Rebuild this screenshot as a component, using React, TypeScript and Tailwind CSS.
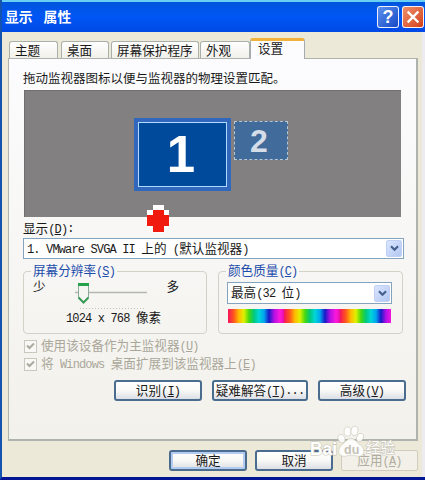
import type { ReactNode } from "react";
import clsx from "clsx";

// Half-width runs get their own face so they take half the advance of a Chinese glyph.
function Txt({ children, hotkey, className }: { children: string; hotkey?: string; className?: string }) {
  const runs = children.match(/[\x20-\x7e]+|[^\x20-\x7e]+/g) ?? [];
  return (
    <span className={clsx("whitespace-pre", className)}>
      {runs.map((run, i) =>
        /[\x20-\x7e]/.test(run) ? (
          <span key={i} className="font-['Liberation_Mono',monospace] text-[12px] tracking-[-0.85px]">
            {run}
          </span>
        ) : (
          <span key={i}>{run}</span>
        ),
      )}
      {hotkey && (
        <span className="font-['Liberation_Mono',monospace] text-[12px] tracking-[-0.85px]">
          (<span className="underline underline-offset-1">{hotkey}</span>)
        </span>
      )}
    </span>
  );
}

const tabs = [
  { label: "主题", className: "w-[49px] pl-[5px]" },
  { label: "桌面", className: "ml-[3px] w-[48px] pl-[5px]" },
  { label: "屏幕保护程序", className: "ml-[2px] w-[88px] pl-[5px]" },
  { label: "外观", className: "ml-px w-[50px] pl-[5px]" },
];

function Combo({ children, className }: { children: ReactNode; className?: string }) {
  return (
    <div className={clsx("flex items-center justify-between border border-[#83a3bf] bg-white pl-[3px] pr-px", className)}>
      {children}
      <span className="flex h-[17px] w-[16px] items-center justify-center rounded-[2px] border border-[#c0d0f5] bg-linear-to-br from-[#dbe6ff] to-[#b3c7f2]">
        <svg width="9" height="7" viewBox="0 0 9 7" fill="none" stroke="#45608c" strokeWidth="2.2">
          <path d="M1 1.3 4.5 4.8 8 1.3" />
        </svg>
      </span>
    </div>
  );
}

function Group({ title, hotkey, className, children }: { title: string; hotkey: string; className: string; children: ReactNode }) {
  return (
    <div className={clsx("relative h-[63px] rounded-[4px] border border-[#d3d2c8]", className)}>
      <span className="absolute -top-[10px] left-[7px] flex h-[18px] items-center bg-[#f8f7f5] px-[2px] text-[#1c4dab]">
        <Txt hotkey={hotkey}>{title}</Txt>
      </span>
      {children}
    </div>
  );
}

function Button({ children, hotkey, className }: { children: string; hotkey?: string; className?: string }) {
  return (
    <button
      className={clsx(
        "flex h-[21px] items-center justify-center rounded-[3px] border-2 border-[#4a6c8f] bg-linear-to-b from-white via-[#f8f8f6] to-[#dcdfe5]",
        className,
      )}
    >
      <Txt hotkey={hotkey}>{children}</Txt>
    </button>
  );
}

function Check({ children, hotkey }: { children: string; hotkey: string }) {
  return (
    <div className="flex h-[18px] items-center text-[#aaa79a]">
      <svg width="13" height="13" viewBox="0 0 13 13" className="mr-[4px]">
        <rect x=".5" y=".5" width="12" height="12" fill="#f8f8f6" stroke="#c9c8bd" />
        <path d="M3 5.5 5.5 8 10 3.5" fill="none" stroke="#aaa99d" strokeWidth="2" />
      </svg>
      <Txt hotkey={hotkey}>{children}</Txt>
    </div>
  );
}

function Watermark() {
  return (
    <svg className="pointer-events-none absolute left-[304px] top-[423px]" width="92" height="48" viewBox="0 0 92 48">
      <g fill="#fff" fillOpacity=".9" stroke="#cac7b9" strokeWidth=".6">
        <ellipse cx="35.5" cy="15.5" rx="3.3" ry="4.3" transform="rotate(-20 35.5 15.5)" />
        <ellipse cx="41.5" cy="8.5" rx="3.4" ry="4.6" />
        <ellipse cx="48.5" cy="7.8" rx="3.4" ry="4.6" transform="rotate(12 48.5 7.8)" />
        <ellipse cx="54" cy="14.5" rx="3.2" ry="4.3" transform="rotate(24 54 14.5)" />
        <path d="M45 15.5C41 15.5 40 19 37 21C32 25 31 31 36 33C40 34 42 32 45 32C49 32 52 34 55 33C60 30 58 24 53 21C50 19 49 15.5 45 15.5Z" />
      </g>
      <g fill="#fff" stroke="#c3c0b4" strokeWidth="1" paintOrder="stroke" fontWeight="700">
        <text x="4" y="31.5" fontSize="18" textLength="27" lengthAdjust="spacingAndGlyphs" fontFamily="Liberation Sans, sans-serif">Bai</text>
        <text x="60" y="30" fontSize="14.5" fontWeight="400" fontFamily="Noto Sans CJK SC, sans-serif">经验</text>
      </g>
      <text x="38" y="31" fontSize="12.5" fontWeight="700" fill="#c4c1b5" fontFamily="Liberation Sans, sans-serif">du</text>
    </svg>
  );
}

const rainbow =
  "bg-[repeating-linear-gradient(90deg,#f5145c_0px,#ff5a1a_6px,#ffbd00_11px,#dff000_16px,#45d810_21px,#00c87c_26px,#00d6d8_31px,#00a5ee_36px,#171bc5_41px,#b010e5_46px,#ff18dc_52px,#e411a5_56px)]";

export default function App() {
  return (
    <div className="relative flex h-[480px] w-[425px] flex-col overflow-hidden border-b-[3px] border-l-2 border-b-[#001494] border-l-[#1553b0] bg-[#ece9d8] font-['Noto_Sans_CJK_SC',sans-serif] text-[12.6px] leading-none text-[#1a1a1a]">
      <header className="-ml-0.5 flex h-[32px] shrink-0 items-center border-t-2 border-t-[#69cff5] bg-linear-to-b from-[#0055dd] via-[#0056f4] to-[#0049e5] pl-[5px] pr-px text-white">
        <span className="flex-1 whitespace-pre text-[13.8px] font-bold">
          显示<span className="inline-block w-[11px]" />属性
        </span>
        <span className="mr-[3px] flex size-[22px] items-center justify-center rounded-[3px] border border-white/90 bg-linear-to-br from-[#5d91ef] to-[#1746c4] font-['Liberation_Sans',sans-serif] text-[18px] font-bold">
          ?
        </span>
        <span className="flex size-[22px] items-center justify-center rounded-[3px] border border-white/90 bg-linear-to-br from-[#ed8e6a] to-[#d33e13]">
          <svg width="14" height="14" viewBox="0 0 14 14" stroke="white" strokeWidth="2.4" strokeLinecap="square">
            <path d="m2.5 2.5 9 9m0-9-9 9" />
          </svg>
        </span>
      </header>

      <nav className="relative z-10 -mb-px flex h-[27px] shrink-0 items-end pl-[7px]">
        {tabs.map((tab) => (
          <div
            key={tab.label}
            className={clsx(
              "mb-px flex h-[17px] items-center rounded-t-[3px] border border-b-0 border-[#a9b0ab] bg-linear-to-b from-white to-[#f1f0ea]",
              tab.className,
            )}
          >
            <Txt>{tab.label}</Txt>
          </div>
        ))}
        <div className="flex h-[21px] w-[55px] items-center rounded-t-[3px] border-x border-t-[3px] border-x-[#a5acaf] border-t-[#f0b23c] bg-[#fcfcfe] pb-[3px] pl-[7px]">
          <Txt>设置</Txt>
        </div>
      </nav>

      <main className="ml-[6px] flex h-[383px] w-[410px] shrink-0 flex-col border border-r-2 border-b-2 border-[#aeb3ad] bg-linear-to-b from-[#fcfcfe] to-[#f2f1eb] pl-[14px]">
        <div className="flex h-[31px] items-center pt-[8px]">
          <Txt className="text-[12.5px]">拖动监视器图标以便与监视器的物理设置匹配。</Txt>
        </div>

        {/* monitor arrangement canvas */}
        <div className="relative ml-px h-[127px] w-[377px] shrink-0 border-t border-l border-[#716f6d] bg-[#828080]">
          <div className="absolute left-[109px] top-[27px] h-[73px] w-[97px] bg-[#3168bd] p-[4px]">
            <div className="flex h-full items-center justify-center border border-[#b2d8fb] bg-[#004a9c] pb-px pr-[3px] font-['Liberation_Sans',sans-serif] text-[51px] font-bold text-white">
              1
            </div>
          </div>
          <div className="absolute left-[209px] top-[30px] flex h-[39px] w-[54px] items-center justify-center border border-dashed border-[#b7c6d1] bg-[#416b9b] pr-[4px] font-['Liberation_Sans',sans-serif] text-[32px] font-bold text-[#d5dde8]">
            2
          </div>
          <svg className="absolute left-[119px] top-[114px]" width="26" height="29" viewBox="0 0 26 29" shapeRendering="crispEdges">
            <path fill="#fff" d="M9 0h11v5h5v18h-5v5H9v-5H3V5h6z" />
            <path fill="#f01b0e" d="M9 5h11v5h5v11h-5v6H9v-6H3V10h6z" />
          </svg>
        </div>

        <div className="flex h-[20px] items-center pt-[3px]">
          <Txt hotkey="D">显示</Txt>
          <span className="font-['Liberation_Mono',monospace] text-[12px]">:</span>
        </div>
        <Combo className="mt-px h-[21px] w-[381px] shrink-0">
          <Txt>1. VMware SVGA II 上的 (默认监视器)</Txt>
        </Combo>

        <div className="mt-[12px] flex">
          <Group title="屏幕分辨率" hotkey="S" className="w-[184px]">
            <div className="flex h-[46px] pl-[9px] pt-[8px]">
              <Txt>少</Txt>
              <svg className="ml-[28px] mt-[2px]" width="76" height="32" viewBox="0 0 76 32">
                <path d="M1 10.5H73" stroke="#b5b8af" strokeWidth="1.5" />
                <path d="M6 26.5H71" stroke="#c5c3bb" strokeDasharray="1 2" />
                <path d="M4.5 1.5h10v14l-5 5-5-5z" fill="#f5f6f2" stroke="#8ba89a" />
                <path d="M4 2.5h11" stroke="#26a14b" strokeWidth="3" />
                <path d="m4.5 15.5 5 5 5-5" fill="none" stroke="#3a9a55" strokeWidth="2" />
              </svg>
              <Txt className="ml-[17px]">多</Txt>
            </div>
            <div className="-mt-[7px] pl-[42px]">
              <Txt>1024 x 768 像素</Txt>
            </div>
          </Group>
          <Group title="颜色质量" hotkey="C" className="ml-[11px] w-[185px]">
            <div className="pl-[8px] pt-[10px]">
              <Combo className="h-[22px] w-[165px]">
                <Txt>最高(32 位)</Txt>
              </Combo>
              <div className={clsx("ml-px mt-[5px] h-[14px] w-[163px]", rainbow)} />
            </div>
          </Group>
        </div>

        <div className="mt-[3px] pl-px">
          <Check hotkey="U">使用该设备作为主监视器</Check>
          <Check hotkey="E">将 Windows 桌面扩展到该监视器上</Check>
        </div>

        <div className="mt-[7px] flex pl-[91px]">
          <Button hotkey="I" className="w-[88px]">识别</Button>
          <button className="ml-[10px] flex h-[21px] w-[96px] items-center justify-center rounded-[3px] border-2 border-[#4a6c8f] bg-linear-to-b from-white via-[#f8f8f6] to-[#dcdfe5]">
            <Txt hotkey="T">疑难解答</Txt>
            <span className="font-['Liberation_Mono',monospace] text-[12px] tracking-[-0.85px]">...</span>
          </button>
          <Button hotkey="V" className="ml-[10px] w-[88px]">高级</Button>
        </div>
      </main>

      <footer className="mt-[9px] flex pl-[167px]">
        <Button className="w-[78px] shadow-[inset_0_0_0_2px_#b4cbf0]">确定</Button>
        <Button className="ml-[8px] w-[78px]">取消</Button>
        <div className="ml-[8px] flex h-[21px] w-[77px] items-center justify-center rounded-[2px] border border-[#d1cdbe] bg-[#f2f0e8] pt-px text-[#b0ada0]">
          <Txt hotkey="A">应用</Txt>
        </div>
      </footer>

      <div className="absolute bottom-0 right-0 top-[32px] w-[3px] bg-[#edeaf0]" />
      <Watermark />
    </div>
  );
}
